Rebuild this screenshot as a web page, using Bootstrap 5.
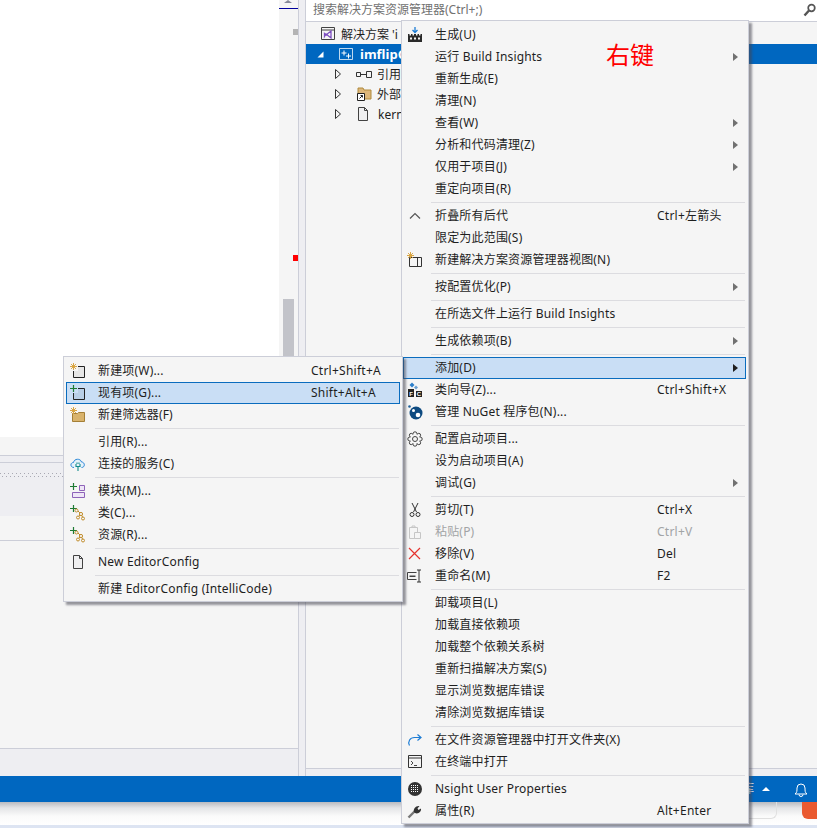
<!DOCTYPE html>
<html lang="zh-CN">
<head>
<meta charset="utf-8">
<title>解决方案资源管理器</title>
<link href="https://cdn.jsdelivr.net/npm/bootstrap@5.3.0/dist/css/bootstrap.min.css" rel="stylesheet">
<style>
html,body{margin:0;height:828px;overflow:hidden;}
body{background:#dde4f2;font-family:"Noto Sans","Noto Sans CJK SC",sans-serif;font-size:12px;line-height:1;color:#1e1e1e;position:relative;}
svg{display:block;flex:none;}
.vs-work{height:776px;background:#eeeef2;}
.vs-left{width:299px;border-right:1px solid #ccced8;}
.vs-top{height:437px;}
.vs-editor{width:279px;background:#fff;}
.vs-scroll{width:19px;background:#f5f5f5;position:relative;padding-left:4px;}
.vs-thumb{width:11px;height:138px;margin-top:299px;background:#c2c3c9;}
.vs-arrow{position:absolute;left:5px;top:0;width:0;height:0;border-left:4px solid transparent;border-right:4px solid transparent;border-bottom:3px solid #868999;}
.vs-up{border-bottom:4px solid #fff;}
.vs-caret{position:absolute;left:0;top:8px;width:19px;height:1px;background:#00009c;}
.vs-mark1{position:absolute;left:14px;top:29px;width:5px;height:6px;background:#b4b4b4;}
.vs-mark2{position:absolute;left:14px;top:255px;width:5px;height:6px;background:#f00;}
.vs-bar{height:18px;background:#f5f5f5;}
.vs-tab{height:8px;border-top:1px solid #ccced8;border-bottom:1px solid #ccced8;}
.vs-dots{height:53px;padding-top:10px;}
.vs-dots i{display:block;height:4px;background-image:linear-gradient(90deg,#a9a9b3 1px,transparent 1px),linear-gradient(90deg,#a9a9b3 1px,transparent 1px);background-size:4px 1px,4px 1px;background-repeat:repeat-x,repeat-x;background-position:0 0,2px 3px;}
.vs-pane1{height:25px;background:#f5f5f5;border-bottom:1px solid #ccced8;}
.vs-pane2{height:208px;background:#f5f5f5;border-bottom:1px solid #ccced8;}
.vs-right{margin-left:6px;width:512px;border-left:1px solid #ccced8;}
.vs-search{height:22px;background:#fff;padding:1px 1px 2px 7px;color:#717171;border-bottom:1px solid #ccced8;}
.vs-tree{height:747px;background:#f5f5f5;border-bottom:1px solid #ccced8;padding-top:2px;}
.vs-node{height:20px;white-space:nowrap;overflow:hidden;}
.vs-node span{padding-top:1px;}
.vs-node.is-on{background:#0067c0;color:#fff;font-weight:700;}
.vs-i1{margin-left:15px;}
.vs-t1{margin-left:6px;}
.vs-tri0{margin-left:11px;}
.vs-i2{margin-left:15px;}
.vs-t2{margin-left:7px;font-size:13px;}
.vs-tri{margin-left:29px;}
.vs-i3{margin-left:15px;}
.vs-t3{margin-left:5px;}
.vs-i4{margin-left:16px;}
.vs-i5{margin-left:14px;}
.vs-t5{margin-left:7px;}
.vs-status{height:26px;background:#0067c0;color:#fff;padding-right:9px;}
.vs-bell{margin-left:24px;}
.vs-foot{height:23px;background:linear-gradient(#b9bbc0 0,#e4e5e7 6px,#fafafa 14px,#fff 100%);}
.vs-pill{width:40px;height:17px;border:1px solid #e0e0e0;border-top:0;border-left:0;border-radius:0 0 6px 0;margin-left:737px;}
.vs-orange{width:15px;height:17px;background:#ea5a30;border-radius:0 0 0 6px;margin-left:25px;}
.vs-note{position:absolute;left:606px;top:40px;font-size:24px;line-height:28px;color:#f00;z-index:5;font-family:"Noto Sans CJK SC",sans-serif;}
.dropdown-menu.ctx-menu{display:block;position:absolute;margin:0;border-radius:0;min-width:0;background:#f5f5f5;border:1px solid #ccced8;font-size:12px;box-shadow:3px 3px 2px rgba(70,70,80,.55);}
.ctx-main{left:401px;top:20px;width:348px;padding:3px 2px 0 1px;height:804px;z-index:3;}
.ctx-sub{left:63px;top:356px;width:340px;padding:3px 2px 0;height:246px;z-index:4;}
.dropdown-item.ctx-row{display:flex;align-items:center;height:22px;padding:0;color:#1e1e1e;border:1px solid transparent;white-space:nowrap;background:transparent;}
.dropdown-item.ctx-row.is-hot{background:#c9def5;border-color:#0a6cbe;}
.dropdown-item.ctx-row.is-off{color:#a2a4a5;}
.ctx-ico{width:31px;padding-left:3px;flex:none;}
.ctx-label{flex:1;letter-spacing:.18px;}
.ctx-keys{width:88px;flex:none;letter-spacing:.25px;}
.ctx-more{width:88px;flex:none;display:flex;justify-content:flex-end;padding-right:7px;}
.ctx-tri{width:0;height:0;border-top:4px solid transparent;border-bottom:4px solid transparent;border-left:5px solid #717171;}
.is-hot .ctx-tri{border-left-color:#1e1e1e;}
.dropdown-divider.ctx-line{margin:2px 1px 2px 29px;height:1px;border-top:1px solid #dcdce0;opacity:1;}
.ctx-main .dropdown-divider.ctx-line{margin:2px 1px 2px 28px;}
</style>
</head>
<body>
<svg width="0" height="0" class="position-absolute">
<defs>
<symbol id="star" viewBox="0 0 8 8"><path d="M4 0v8M0 4h8M1.2 1.2l5.6 5.6M6.8 1.2L1.2 6.8" stroke="#d8a23c" stroke-width="1.1"/></symbol>
<symbol id="plus" viewBox="0 0 7 7"><path d="M3.5 0v7M0 3.5h7" stroke="#1e7b34" stroke-width="1.2"/></symbol>
<symbol id="cls" viewBox="0 0 16 16"><use href="#plus" x="0" y="0" width="7" height="7"/><path d="M7 5l4 4m0 0l-3 3m3-3l2 4" stroke="#b98a2f" fill="none"/><circle cx="6.5" cy="5.5" r="1.5" fill="#f5f5f5" stroke="#c28e2c"/><circle cx="11" cy="9" r="1.6" fill="#f5f5f5" stroke="#c28e2c"/><circle cx="8" cy="12.5" r="1.5" fill="#f5f5f5" stroke="#c28e2c"/><circle cx="13" cy="13.5" r="1.5" fill="#f5f5f5" stroke="#c28e2c"/></symbol>
<symbol id="doc" viewBox="0 0 16 16"><path d="M3.5 1.500h6l3 3v10h-9z" fill="#efeff0" stroke="#424242"/><path d="M9.500 1.500v3h3" fill="none" stroke="#424242"/></symbol>
</defs>
</svg>

<div class="vs-work d-flex">
  <div class="vs-left d-flex flex-column">
    <div class="vs-top d-flex">
      <div class="vs-editor"></div>
      <div class="vs-scroll">
        <span class="vs-arrow"></span><span class="vs-caret"></span><span class="vs-mark1"></span><span class="vs-mark2"></span>
        <div class="vs-thumb"></div>
      </div>
    </div>
    <div class="vs-bar"></div>
    <div class="vs-tab"></div>
    <div class="vs-dots"><i></i></div>
    <div class="vs-pane1"></div>
    <div class="vs-pane2"></div>
  </div>
  <div class="vs-right d-flex flex-column flex-grow-1">
    <div class="vs-search d-flex align-items-center justify-content-between">
      <span>搜索解决方案资源管理器(Ctrl+;)</span>
      <svg width="13" height="14" viewBox="0 0 13 14"><circle cx="8.500" cy="5" r="3.300" fill="none" stroke="#555" stroke-width="1.700"/><path d="M6 7.500L1.500 12.500" stroke="#555" stroke-width="2.400"/></svg>
    </div>
    <div class="vs-tree">
      <div class="vs-node d-flex align-items-center">
        <svg class="vs-i1" width="14" height="14" viewBox="0 0 14 14"><path d="M.5.5h13v12H.5z" fill="#f5f5f5" stroke="#424242"/><path d="M.5 3h13" stroke="#424242"/><path d="M5 7l5 4V4L5 8 3.500 6.500v3z" fill="none" stroke="#7d4fc0" stroke-width="1.300"/></svg>
        <span class="vs-t1">解决方案 'i</span>
      </div>
      <div class="vs-node is-on d-flex align-items-center">
        <svg class="vs-tri0" width="7" height="7" viewBox="0 0 7 7"><path d="M6.500.5v6h-6z" fill="#fff"/></svg>
        <svg class="vs-i2" width="14" height="12" viewBox="0 0 14 12"><path d="M.5.5h13v11H.5z" fill="none" stroke="#fff" stroke-opacity=".75"/><path d="M5 2.500v5M2.500 5h5M9.500 5.500v5M7 8h5" stroke="#fff"/></svg>
        <span class="vs-t2">imflipG</span>
      </div>
      <div class="vs-node d-flex align-items-center">
        <svg class="vs-tri" width="6" height="10" viewBox="0 0 6 10"><path d="M.5.5l5 4.500-5 4.500z" fill="#f5f5f5" stroke="#333"/></svg>
        <svg class="vs-i3" width="16" height="7" viewBox="0 0 16 7"><path d="M.5 1.500h4v4h-4zM10.500.5h5v6h-5zM4.500 3.500h6" fill="none" stroke="#333"/></svg>
        <span class="vs-t3">引用</span>
      </div>
      <div class="vs-node d-flex align-items-center">
        <svg class="vs-tri" width="6" height="10" viewBox="0 0 6 10"><path d="M.5.5l5 4.500-5 4.500z" fill="#f5f5f5" stroke="#333"/></svg>
        <svg class="vs-i4" width="15" height="14" viewBox="0 0 15 14"><path d="M1 1h5l1 2h7v9H1z" fill="#dcb67a" stroke="#b08a3c"/><path d="M.5 6.500h7v7h-7z" fill="#fff" stroke="#222"/><path d="M2.500 11.500l3-3M3.500 8.500h2v2" fill="none" stroke="#222"/></svg>
        <span class="vs-t3">外部</span>
      </div>
      <div class="vs-node d-flex align-items-center">
        <svg class="vs-tri" width="6" height="10" viewBox="0 0 6 10"><path d="M.5.5l5 4.500-5 4.500z" fill="#f5f5f5" stroke="#333"/></svg>
        <svg class="vs-i5" width="16" height="16" viewBox="0 0 16 16"><use href="#doc"/></svg>
        <span class="vs-t5">kern</span>
      </div>
    </div>
  </div>
</div>

<div class="vs-status d-flex align-items-center justify-content-end">
  <span>选择存储库</span>
  <span class="vs-arrow vs-up position-static ms-2"></span>
  <svg class="vs-bell" width="14" height="15" viewBox="0 0 14 15"><path d="M1 12c2-1.500 2-3 2-6a4 4 0 0 1 8 0c0 3 0 4.500 2 6zM5 12.500a2 2 0 0 0 4 0" fill="none" stroke="#fff"/></svg>
</div>
<div class="vs-foot d-flex align-items-start">
  <div class="vs-pill"></div>
  <div class="vs-orange"></div>
</div>

<div class="vs-note">右键</div>

<div class="dropdown-menu show ctx-menu ctx-main">
  <a class="dropdown-item ctx-row"><span class="ctx-ico"><svg width="16" height="16" viewBox="0 0 16 16"><path d="M8 0v5M5.500 3L8 5.500 10.500 3" fill="none" stroke="#1c7cd5" stroke-width="1.300"/><path d="M1 15V7h1.500v1.500H4V7h1.500v1.500H7V7h2v1.500h1.500V7H12v1.500h1.500V7H15v8z" fill="#2a2a2a"/><path d="M3 10.500h2v2H3zM7 10.500h2v2H7zM11 10.500h2v2h-2z" fill="#f5f5f5"/></svg></span><span class="ctx-label">生成(U)</span></a>
  <a class="dropdown-item ctx-row"><span class="ctx-ico"></span><span class="ctx-label">运行 Build Insights</span><span class="ctx-more"><i class="ctx-tri"></i></span></a>
  <a class="dropdown-item ctx-row"><span class="ctx-ico"></span><span class="ctx-label">重新生成(E)</span></a>
  <a class="dropdown-item ctx-row"><span class="ctx-ico"></span><span class="ctx-label">清理(N)</span></a>
  <a class="dropdown-item ctx-row"><span class="ctx-ico"></span><span class="ctx-label">查看(W)</span><span class="ctx-more"><i class="ctx-tri"></i></span></a>
  <a class="dropdown-item ctx-row"><span class="ctx-ico"></span><span class="ctx-label">分析和代码清理(Z)</span><span class="ctx-more"><i class="ctx-tri"></i></span></a>
  <a class="dropdown-item ctx-row"><span class="ctx-ico"></span><span class="ctx-label">仅用于项目(J)</span><span class="ctx-more"><i class="ctx-tri"></i></span></a>
  <a class="dropdown-item ctx-row"><span class="ctx-ico"></span><span class="ctx-label">重定向项目(R)</span></a>
  <hr class="dropdown-divider ctx-line">
  <a class="dropdown-item ctx-row"><span class="ctx-ico"><svg width="16" height="16" viewBox="0 0 16 16"><path d="M3 10.500l5-5 5 5" fill="none" stroke="#555" stroke-width="1.200"/></svg></span><span class="ctx-label">折叠所有后代</span><span class="ctx-keys">Ctrl+左箭头</span></a>
  <a class="dropdown-item ctx-row"><span class="ctx-ico"></span><span class="ctx-label">限定为此范围(S)</span></a>
  <a class="dropdown-item ctx-row"><span class="ctx-ico"><svg width="16" height="16" viewBox="0 0 16 16"><path d="M2.500 5.500h12v9h-12zM10.500 5.500v9" fill="#f5f5f5" stroke="#333"/><use href="#star" x="0" y="0" width="7" height="7"/></svg></span><span class="ctx-label">新建解决方案资源管理器视图(N)</span></a>
  <hr class="dropdown-divider ctx-line">
  <a class="dropdown-item ctx-row"><span class="ctx-ico"></span><span class="ctx-label">按配置优化(P)</span><span class="ctx-more"><i class="ctx-tri"></i></span></a>
  <hr class="dropdown-divider ctx-line">
  <a class="dropdown-item ctx-row"><span class="ctx-ico"></span><span class="ctx-label">在所选文件上运行 Build Insights</span></a>
  <hr class="dropdown-divider ctx-line">
  <a class="dropdown-item ctx-row"><span class="ctx-ico"></span><span class="ctx-label">生成依赖项(B)</span><span class="ctx-more"><i class="ctx-tri"></i></span></a>
  <hr class="dropdown-divider ctx-line">
  <a class="dropdown-item ctx-row is-hot"><span class="ctx-ico"></span><span class="ctx-label">添加(D)</span><span class="ctx-more"><i class="ctx-tri"></i></span></a>
  <a class="dropdown-item ctx-row"><span class="ctx-ico"><svg width="16" height="16" viewBox="0 0 16 16"><path d="M5 .5l2.500 2.500L5 5.500 2.500 3z" fill="#2c7fcb"/><path d="M9 3.500l2 2-2 2-2-2z" fill="#6a9fd0"/><path d="M1 7h6v8H1zM9 9h6v6H9z" fill="#222"/><text x="4" y="14" font-size="6" font-weight="700" text-anchor="middle" fill="#fff" font-family="Liberation Sans">F</text><text x="12" y="14" font-size="6" font-weight="700" text-anchor="middle" fill="#fff" font-family="Liberation Sans">C</text></svg></span><span class="ctx-label">类向导(Z)...</span><span class="ctx-keys">Ctrl+Shift+X</span></a>
  <a class="dropdown-item ctx-row"><span class="ctx-ico"><svg width="16" height="16" viewBox="0 0 16 16"><circle cx="2.500" cy="2.500" r="1.300" fill="#1f5f99"/><circle cx="9" cy="9" r="6.500" fill="#0d4a80"/><circle cx="6.500" cy="6.500" r="1.500" fill="#fff"/><circle cx="11" cy="11" r="2.300" fill="#fff"/></svg></span><span class="ctx-label">管理 NuGet 程序包(N)...</span></a>
  <hr class="dropdown-divider ctx-line">
  <a class="dropdown-item ctx-row"><span class="ctx-ico"><svg width="16" height="16" viewBox="0 0 16 16"><g fill="#f5f5f5" stroke="#444"><circle cx="8" cy="2.700" r="1.900"/><circle cx="8" cy="13.300" r="1.900"/><circle cx="2.700" cy="8" r="1.900"/><circle cx="13.300" cy="8" r="1.900"/><circle cx="4.250" cy="4.250" r="1.900"/><circle cx="11.750" cy="4.250" r="1.900"/><circle cx="4.250" cy="11.750" r="1.900"/><circle cx="11.750" cy="11.750" r="1.900"/></g><circle cx="8" cy="8" r="5" fill="#f5f5f5"/><circle cx="8" cy="8" r="2.500" fill="none" stroke="#444"/></svg></span><span class="ctx-label">配置启动项目...</span></a>
  <a class="dropdown-item ctx-row"><span class="ctx-ico"></span><span class="ctx-label">设为启动项目(A)</span></a>
  <a class="dropdown-item ctx-row"><span class="ctx-ico"></span><span class="ctx-label">调试(G)</span><span class="ctx-more"><i class="ctx-tri"></i></span></a>
  <hr class="dropdown-divider ctx-line">
  <a class="dropdown-item ctx-row"><span class="ctx-ico"><svg width="16" height="16" viewBox="0 0 16 16"><path d="M5 1l4.500 9M11 1L6.500 10" stroke="#333" fill="none"/><circle cx="5" cy="12.500" r="2" fill="none" stroke="#333"/><circle cx="11" cy="12.500" r="2" fill="none" stroke="#333"/></svg></span><span class="ctx-label">剪切(T)</span><span class="ctx-keys">Ctrl+X</span></a>
  <a class="dropdown-item ctx-row is-off"><span class="ctx-ico"><svg width="16" height="16" viewBox="0 0 16 16"><path d="M2.500 3.500h8v11h-8zM5 3.500V2h3v1.500" fill="#f5f5f5" stroke="#c6c6c6"/><path d="M7.500 8.500h6v6h-6z" fill="#f5f5f5" stroke="#c6c6c6"/></svg></span><span class="ctx-label">粘贴(P)</span><span class="ctx-keys">Ctrl+V</span></a>
  <a class="dropdown-item ctx-row"><span class="ctx-ico"><svg width="16" height="16" viewBox="0 0 16 16"><path d="M2 2l11 11M13 2L2 13" stroke="#e5332e" stroke-width="1.200" fill="none"/></svg></span><span class="ctx-label">移除(V)</span><span class="ctx-keys">Del</span></a>
  <a class="dropdown-item ctx-row"><span class="ctx-ico"><svg width="16" height="16" viewBox="0 0 16 16"><path d="M9.500 4.500H.5v7h9" fill="none" stroke="#424242"/><path d="M2.500 7.500h6v1.500h-6z" fill="#424242"/><path d="M10 2h4M12 2v12M10 14h4" fill="none" stroke="#333"/></svg></span><span class="ctx-label">重命名(M)</span><span class="ctx-keys">F2</span></a>
  <hr class="dropdown-divider ctx-line">
  <a class="dropdown-item ctx-row"><span class="ctx-ico"></span><span class="ctx-label">卸载项目(L)</span></a>
  <a class="dropdown-item ctx-row"><span class="ctx-ico"></span><span class="ctx-label">加载直接依赖项</span></a>
  <a class="dropdown-item ctx-row"><span class="ctx-ico"></span><span class="ctx-label">加载整个依赖关系树</span></a>
  <a class="dropdown-item ctx-row"><span class="ctx-ico"></span><span class="ctx-label">重新扫描解决方案(S)</span></a>
  <a class="dropdown-item ctx-row"><span class="ctx-ico"></span><span class="ctx-label">显示浏览数据库错误</span></a>
  <a class="dropdown-item ctx-row"><span class="ctx-ico"></span><span class="ctx-label">清除浏览数据库错误</span></a>
  <hr class="dropdown-divider ctx-line">
  <a class="dropdown-item ctx-row"><span class="ctx-ico"><svg width="16" height="16" viewBox="0 0 16 16"><path d="M2.500 13.500C.5 9.500 3 5.500 7.500 5.500h6M10.500 2.500l3.500 3-3.500 3" fill="none" stroke="#1c7cd5" stroke-width="1.200"/></svg></span><span class="ctx-label">在文件资源管理器中打开文件夹(X)</span></a>
  <a class="dropdown-item ctx-row"><span class="ctx-ico"><svg width="16" height="16" viewBox="0 0 16 16"><path d="M1.500 1.500h13v12h-13z" fill="#f5f5f5" stroke="#333"/><path d="M1.500 4h13" stroke="#333"/><path d="M4 7l2 2-2 2M7 11.500h3" fill="none" stroke="#333" stroke-width=".9"/></svg></span><span class="ctx-label">在终端中打开</span></a>
  <hr class="dropdown-divider ctx-line">
  <a class="dropdown-item ctx-row"><span class="ctx-ico"><svg width="16" height="16" viewBox="0 0 16 16"><circle cx="8" cy="8" r="7" fill="#333"/><path d="M4 4.500h8M4 6.500h8M4 8.500h8M4 10.500h8" stroke="#fff" stroke-width="1" stroke-dasharray="1 1"/></svg></span><span class="ctx-label">Nsight User Properties</span></a>
  <a class="dropdown-item ctx-row"><span class="ctx-ico"><svg width="16" height="16" viewBox="0 0 16 16"><path d="M1.500 14.500l7-7" stroke="#777" stroke-width="2.400"/><path d="M7 9c-1-3 1.500-6.500 5.500-6l-2 2.500 1 1.500 2.500-1.500c.5 3.500-3 6-6 4.500z" fill="#333"/></svg></span><span class="ctx-label">属性(R)</span><span class="ctx-keys">Alt+Enter</span></a>
</div>

<div class="dropdown-menu show ctx-menu ctx-sub">
  <a class="dropdown-item ctx-row"><span class="ctx-ico"><svg width="16" height="16" viewBox="0 0 16 16"><path d="M3.500 3.500h11v11h-11z" fill="#e6e6e6" stroke="#222"/><path d="M0 0h8v8H0z" fill="#f5f5f5"/><use href="#star" x="0" y="0" width="7" height="7"/></svg></span><span class="ctx-label">新建项(W)...</span><span class="ctx-keys">Ctrl+Shift+A</span></a>
  <a class="dropdown-item ctx-row is-hot"><span class="ctx-ico"><svg width="16" height="16" viewBox="0 0 16 16"><path d="M3.500 3.500h11v11h-11z" fill="#b9cfe6" stroke="#222"/><path d="M0 0h8v8H0z" fill="#c9def5"/><use href="#plus" x="0" y="0" width="7" height="7"/></svg></span><span class="ctx-label">现有项(G)...</span><span class="ctx-keys">Shift+Alt+A</span></a>
  <a class="dropdown-item ctx-row"><span class="ctx-ico"><svg width="16" height="16" viewBox="0 0 16 16"><path d="M2.500 6.500h5l1-1h6v9h-12z" fill="#d9b36c" stroke="#a47f36"/><use href="#star" x="0" y="0" width="7" height="7"/></svg></span><span class="ctx-label">新建筛选器(F)</span></a>
  <hr class="dropdown-divider ctx-line">
  <a class="dropdown-item ctx-row"><span class="ctx-ico"></span><span class="ctx-label">引用(R)...</span></a>
  <a class="dropdown-item ctx-row"><span class="ctx-ico"><svg width="16" height="16" viewBox="0 0 16 16"><path d="M4 11.500c-4 0-4-5-.5-5 .5-4 7-4.500 8-.5 3.500 0 4 5.500 0 5.500" fill="#e6f1fb" stroke="#2b88d8"/><path d="M6 8v2.500h4V8M7 6.500V8M9 6.500V8M8 10.500V15" fill="none" stroke="#118a8a" stroke-width="1.100"/></svg></span><span class="ctx-label">连接的服务(C)</span></a>
  <hr class="dropdown-divider ctx-line">
  <a class="dropdown-item ctx-row"><span class="ctx-ico"><svg width="16" height="16" viewBox="0 0 16 16"><use href="#plus" x="0" y="0" width="7" height="7"/><path d="M9.500 2.500h5v5h-5zM2.500 9.500h12v5h-12z" fill="#efe6f7" stroke="#8e63b9"/></svg></span><span class="ctx-label">模块(M)...</span></a>
  <a class="dropdown-item ctx-row"><span class="ctx-ico"><svg width="16" height="16" viewBox="0 0 16 16"><use href="#cls"/></svg></span><span class="ctx-label">类(C)...</span></a>
  <a class="dropdown-item ctx-row"><span class="ctx-ico"><svg width="16" height="16" viewBox="0 0 16 16"><use href="#cls"/></svg></span><span class="ctx-label">资源(R)...</span></a>
  <hr class="dropdown-divider ctx-line">
  <a class="dropdown-item ctx-row"><span class="ctx-ico"><svg width="16" height="16" viewBox="0 0 16 16"><use href="#doc"/></svg></span><span class="ctx-label">New EditorConfig</span></a>
  <hr class="dropdown-divider ctx-line">
  <a class="dropdown-item ctx-row"><span class="ctx-ico"></span><span class="ctx-label">新建 EditorConfig (IntelliCode)</span></a>
</div>
<script src="https://cdn.jsdelivr.net/npm/bootstrap@5.3.0/dist/js/bootstrap.bundle.min.js"></script>
</body>
</html>
